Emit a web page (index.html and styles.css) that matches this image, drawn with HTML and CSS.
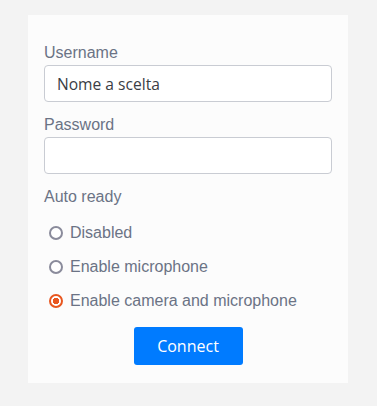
FILE: index.html
```html
<!DOCTYPE html>
<html lang="en">
<head>
  <meta charset="UTF-8">
  <meta name="viewport" content="width=device-width, initial-scale=1.0">
  <title>Connect</title>
  <link rel="stylesheet" href="styles.css">
</head>
<body>
  <div class="panel">
    <label class="field-label" for="username">Username</label>
    <input type="text" id="username" class="field" value="Nome a scelta">

    <label class="field-label spaced" for="password">Password</label>
    <input type="password" id="password" class="field">

    <div class="field-label spaced">Auto ready</div>
    <div class="options">
      <label class="option">
        <input type="radio" name="ready" value="off">
        Disabled
      </label>
      <label class="option">
        <input type="radio" name="ready" value="mic">
        Enable microphone
      </label>
      <label class="option">
        <input type="radio" name="ready" value="cam" checked>
        Enable camera and microphone
      </label>
    </div>

    <div class="actions">
      <button id="connectBtn">Connect</button>
    </div>
  </div>
</body>
</html>
```

FILE: styles.css
```css
html, body {
  margin: 0;
  padding: 0;
  background: #f3f3f3;
  font-family: 'Liberation Sans', Arial, sans-serif;
}

.panel {
  width: 320px;
  margin: 15px 0 0 28px;
  padding: 26px 16px 18px 16px;
  box-sizing: border-box;
  background: #fcfcfc;
}

.field-label {
  display: block;
  font-size: 16px;
  line-height: 24px;
  color: #6b7385;
}

.field-label.spaced {
  margin-top: 11px;
}

.field {
  display: block;
  width: 100%;
  height: 37px;
  padding: 0 12px;
  box-sizing: border-box;
  border: 1px solid #c9ccd3;
  border-radius: 4px;
  background: #fff;
  font-family: 'Open Sans', 'Noto Sans', sans-serif;
  font-size: 15.6px;
  color: #3a3d44;
  outline: none;
}

.options {
  display: flex;
  flex-direction: column;
  margin-top: 7px;
}

.option {
  display: flex;
  align-items: center;
  gap: 7px;
  height: 34px;
  padding-left: 5px;
  font-size: 16px;
  color: #6b7385;
  cursor: pointer;
}

.option input {
  appearance: none;
  -webkit-appearance: none;
  margin: 0;
  width: 14px;
  height: 14px;
  border: 2px solid #8a8b9b;
  border-radius: 50%;
  box-sizing: border-box;
  background: #fff;
  flex-shrink: 0;
}

.option input:checked {
  border-color: #e8561f;
  background: radial-gradient(circle, #e8561f 0 3px, #fff 3.5px);
}

.actions {
  display: flex;
  justify-content: center;
  margin-top: 9px;
}

button {
  width: 109px;
  height: 38px;
  border: none;
  border-radius: 3px;
  background: #007bff;
  color: #fff;
  font-family: 'Open Sans', 'Noto Sans', sans-serif;
  font-size: 16px;
  cursor: pointer;
}

button:hover {
  background: #0069d9;
}
```
